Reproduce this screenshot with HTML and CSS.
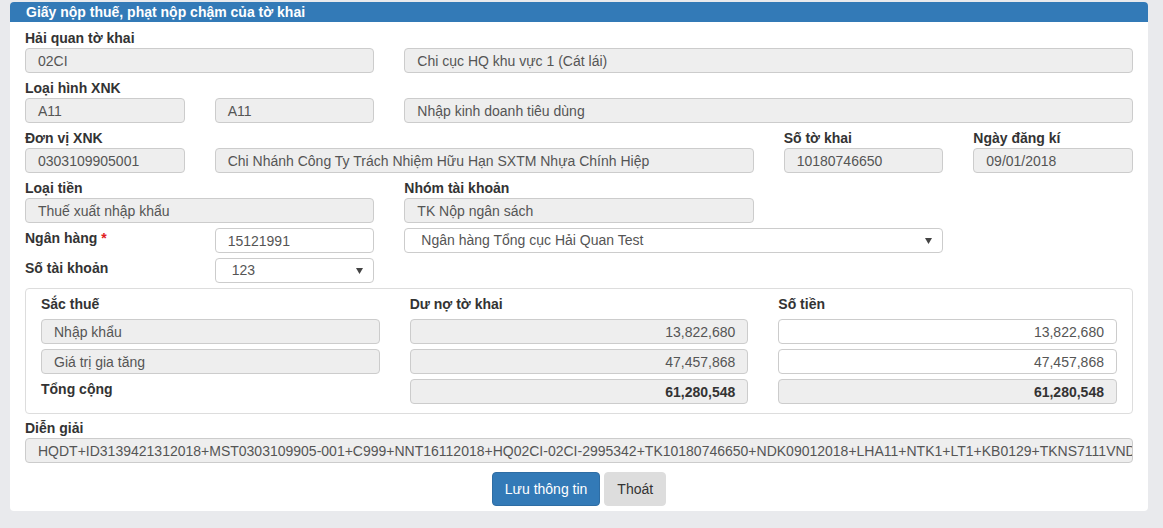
FILE: index.html
```html
<!DOCTYPE html>
<html lang="vi">
<head>
<meta charset="utf-8">
<title>Giấy nộp thuế</title>
<link rel="stylesheet" href="styles.css">
</head>
<body>
<div class="page">
  <div class="panel">
    <div class="panel-head">Giấy nộp thuế, phạt nộp chậm của tờ khai</div>
    <div class="panel-body">
      <div class="row">
        <div class="field c4">
          <div class="lbl">Hải quan tờ khai</div>
          <div class="fc ro">02CI</div>
        </div>
        <div class="field c8">
          <div class="lbl"></div>
          <div class="fc ro">Chi cục HQ khu vực 1 (Cát lái)</div>
        </div>
      </div>
      <div class="row">
        <div class="field c2">
          <div class="lbl">Loại hình XNK</div>
          <div class="fc ro">A11</div>
        </div>
        <div class="field c2">
          <div class="lbl"></div>
          <div class="fc ro">A11</div>
        </div>
        <div class="field c8">
          <div class="lbl"></div>
          <div class="fc ro">Nhập kinh doanh tiêu dùng</div>
        </div>
      </div>
      <div class="row">
        <div class="field c2">
          <div class="lbl">Đơn vị XNK</div>
          <div class="fc ro">0303109905001</div>
        </div>
        <div class="field c6">
          <div class="lbl"></div>
          <div class="fc ro">Chi Nhánh Công Ty Trách Nhiệm Hữu Hạn SXTM Nhựa Chính Hiệp</div>
        </div>
        <div class="field c2">
          <div class="lbl">Số tờ khai</div>
          <div class="fc ro">10180746650</div>
        </div>
        <div class="field c2">
          <div class="lbl">Ngày đăng kí</div>
          <div class="fc ro">09/01/2018</div>
        </div>
      </div>
      <div class="row">
        <div class="field c4">
          <div class="lbl">Loại tiền</div>
          <div class="fc ro">Thuế xuất nhập khẩu</div>
        </div>
        <div class="field c4">
          <div class="lbl">Nhóm tài khoản</div>
          <div class="fc ro">TK Nộp ngân sách</div>
        </div>
      </div>
      <div class="row inline">
        <div class="lbl c2">Ngân hàng <span class="req">*</span></div>
        <div class="fc c2">15121991</div>
        <div class="fc sel c6"><span>Ngân hàng Tổng cục Hải Quan Test</span><svg class="arrow" width="7" height="6" viewBox="0 0 7 6"><path d="M0 0H7L3.5 6Z" fill="#444"/></svg></div>
      </div>
      <div class="row inline">
        <div class="lbl c2">Số tài khoản</div>
        <div class="fc sel c2"><span>123</span><svg class="arrow" width="7" height="6" viewBox="0 0 7 6"><path d="M0 0H7L3.5 6Z" fill="#444"/></svg></div>
      </div>

      <div class="box">
        <div class="col">
          <div class="lbl hd">Sắc thuế</div>
          <div class="fc ro">Nhập khẩu</div>
          <div class="fc ro">Giá trị gia tăng</div>
          <div class="lbl tot">Tổng cộng</div>
        </div>
        <div class="col">
          <div class="lbl hd">Dư nợ tờ khai</div>
          <div class="fc ro num">13,822,680</div>
          <div class="fc ro num">47,457,868</div>
          <div class="fc ro num bold">61,280,548</div>
        </div>
        <div class="col">
          <div class="lbl hd">Số tiền</div>
          <div class="fc num">13,822,680</div>
          <div class="fc num">47,457,868</div>
          <div class="fc ro num bold">61,280,548</div>
        </div>
      </div>

      <div class="field desc">
        <div class="lbl">Diễn giải</div>
        <div class="fc ro">HQDT+ID3139421312018+MST0303109905-001+C999+NNT16112018+HQ02CI-02CI-2995342+TK10180746650+NDK09012018+LHA11+NTK1+LT1+KB0129+TKNS7111VND+CQT1054499</div>
      </div>

      <div class="actions">
        <button class="btn primary" type="button">Lưu thông tin</button>
        <button class="btn plain" type="button">Thoát</button>
      </div>
    </div>
  </div>
</div>
</body>
</html>
```
FILE: styles.css
```css
* { box-sizing: border-box; }

body {
  margin: 0;
  background: #e9eaed;
  font-family: "Liberation Sans", Arial, sans-serif;
  font-size: 14px;
  color: #333;
}

.page {
  padding: 2px 15px 0 10px;
}

.panel {
  background: #fff;
  border-radius: 4px;
}

.panel-head {
  background: #337ab7;
  color: #fff;
  font-weight: bold;
  height: 20px;
  line-height: 20px;
  padding-left: 16px;
  border-radius: 4px 4px 0 0;
}

.panel-body {
  padding: 1px 15px 5px;
}

.row {
  display: grid;
  grid-template-columns: repeat(12, 1fr);
  column-gap: 30px;
}

.c2 { grid-column: span 2; }
.c4 { grid-column: span 4; }
.c6 { grid-column: span 6; }
.c8 { grid-column: span 8; }

.field {
  margin-top: 5px;
}

.row.inline {
  margin-top: 5px;
  align-items: start;
}

.lbl {
  height: 20px;
  line-height: 20px;
  font-weight: bold;
  color: #333;
  white-space: nowrap;
}

.req {
  color: #e02020;
  font-weight: bold;
}

.fc {
  height: 25px;
  line-height: 25px;
  border: 1px solid #ccc;
  border-radius: 4px;
  background: #fff;
  color: #555;
  padding: 0 12px;
  white-space: nowrap;
  overflow: hidden;
}

.fc.ro {
  background: #eee;
}

.fc.sel {
  display: flex;
  align-items: center;
  justify-content: space-between;
  padding: 0 10px 0 16px;
}

.fc.sel span {
  line-height: 25px;
}

.arrow {
  flex: none;
}

.fc.num {
  text-align: right;
}

.fc.bold {
  font-weight: bold;
  color: #333;
}

.box {
  margin-top: 5px;
  border: 1px solid #ddd;
  border-radius: 4px;
  padding: 5px 15px 9px;
  display: grid;
  grid-template-columns: repeat(3, 1fr);
  column-gap: 30px;
}

.col {
  display: flex;
  flex-direction: column;
  gap: 5px;
}

.lbl.tot {
  height: 25px;
}

.field.desc {
  margin-top: 4px;
}

.actions {
  margin-top: 9px;
  display: flex;
  justify-content: center;
  gap: 4px;
}

.btn {
  height: 34px;
  padding: 0 12px;
  font-family: "Liberation Sans", Arial, sans-serif;
  font-size: 14px;
  border-radius: 4px;
  border: 1px solid transparent;
  cursor: pointer;
}

.btn.primary {
  background: #337ab7;
  border-color: #2e6da4;
  color: #fff;
}

.btn.plain {
  background: #ddd;
  border-color: #ddd;
  color: #333;
}
```
